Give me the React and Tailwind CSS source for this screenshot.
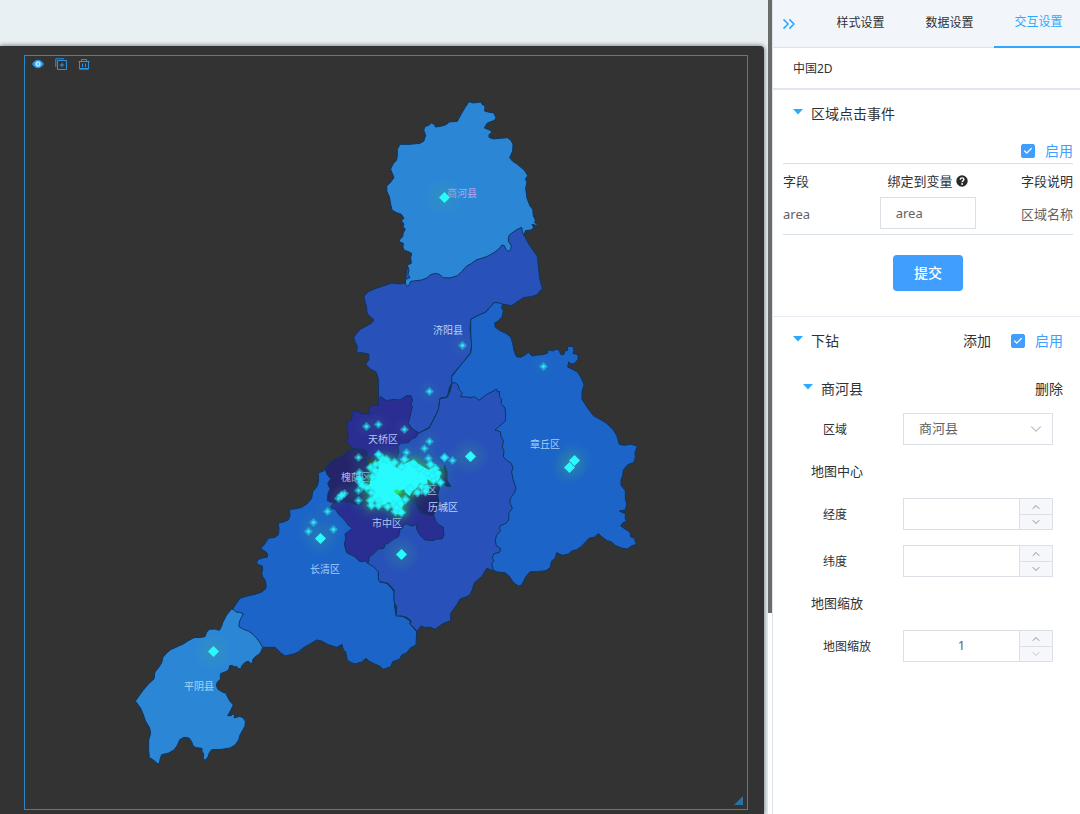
import React from "react";
import { Check, ChevronDown, ChevronUp, ChevronsRight } from "lucide-react";

// Districts in paint order. Outlines are digitised at three times the map scale, from (x, y).
const regions = [
  {
    id: "changqing", x: 220, y: 460, fill: "#1c64c8",
    points: "38,448 48,432 60,415 82,408 105,403 126,396 138,385 138,372 135,360 128,350 125,340 128,330 127,318 114,314 110,308 114,299 124,295 142,291 143,283 138,276 122,265 134,252 145,235 165,232 175,224 177,208 175,190 190,186 205,180 210,168 209,148 225,147 245,142 262,131 275,115 278,95 292,78 296,60 295,40 302,36 310,34 315,25 333,55 345,60 400,120 420,205 405,280 445,308 475,330 475,345 478,365 500,370 512,382 522,395 524,440 528,465 550,470 570,482 570,492 590,515 588,555 572,563 560,578 545,585 540,597 518,605 512,620 490,628 478,618 460,610 448,604 438,595 425,606 405,612 390,606 382,600 377,575 370,570 366,553 350,562 325,554 305,543 290,540 270,552 250,563 235,576 220,582 195,588 182,578 165,562 130,562 118,560 70,520 40,480"
  },
  {
    id: "pingyin", x: 120, y: 590, fill: "#2b87d6",
    points: "335,57 342,60 348,66 358,67 370,71 364,82 358,96 357,110 370,118 385,123 399,133 411,146 420,158 428,172 424,183 418,192 406,200 399,208 396,221 389,218 385,213 374,218 365,228 363,236 355,236 350,229 342,231 338,226 329,227 326,240 315,246 301,251 301,268 292,276 289,286 293,297 307,306 318,310 323,322 330,334 340,345 332,361 323,377 334,377 339,372 344,375 342,384 352,381 359,379 370,384 376,394 375,408 367,422 360,435 356,450 345,465 330,474 305,478 275,479 268,488 264,501 254,512 250,503 251,492 246,484 246,475 228,473 219,467 215,455 207,444 192,442 179,449 172,466 162,480 146,489 125,494 121,505 118,520 112,521 105,514 96,507 88,503 86,480 86,450 92,430 89,414 76,392 69,371 62,355 46,333 70,300 86,281 102,267 105,246 118,230 125,218 129,202 140,189 152,179 190,162 205,152 222,143 245,142 255,140 260,126 268,118 285,117 298,121 305,109 308,98 320,75"
  },
  {
    id: "jiyang", x: 340, y: 220, fill: "#2852b9",
    points: "195,190 180,192 155,189 130,198 105,206 84,216 72,228 75,245 80,262 81,280 92,291 102,299 95,309 78,319 62,327 50,340 41,352 46,367 52,378 50,397 65,398 86,402 87,418 77,432 90,446 108,456 115,475 116,550 180,650 235,640 268,622 295,570 300,535 322,530 329,500 337,488 335,467 365,432 392,398 396,370 390,330 392,298 415,286 438,276 450,262 462,248 485,252 515,257 532,245 550,233 572,230 590,225 607,205 600,180 596,150 592,110 575,85 562,65 550,40 545,22 300,50 200,150"
  },
  {
    id: "zhangqiu", x: 440, y: 290, fill: "#1c64c8",
    points: "162,38 175,38 188,43 184,53 190,62 186,80 175,93 164,99 166,112 180,122 198,130 212,141 218,160 222,182 229,200 242,202 254,196 265,187 276,198 292,195 308,194 323,189 323,179 340,183 347,178 357,180 362,193 370,195 377,181 383,181 382,170 399,169 402,182 399,190 414,194 414,208 408,216 400,222 392,221 386,216 383,231 396,237 413,247 424,265 432,283 426,306 426,328 440,350 460,377 480,388 500,400 520,420 530,436 538,463 552,466 572,463 592,468 585,488 586,502 581,518 563,524 550,540 548,556 543,570 543,586 556,602 556,626 560,642 556,660 538,663 557,672 555,683 560,694 549,698 542,708 560,720 570,727 572,740 583,745 589,763 576,767 562,777 545,774 525,766 514,755 502,752 486,741 475,730 463,742 448,744 435,758 423,770 410,779 395,783 385,792 367,796 350,788 345,805 334,814 331,832 318,842 290,845 271,845 260,856 245,885 235,888 221,878 207,858 195,848 172,846 158,840 120,700 100,450 60,340 35,275 35,260 65,222 92,190 95,170 92,130 92,88 115,76 138,66 150,52"
  },
  {
    id: "shanghe", x: 370, y: 80, fill: "#2b87d6",
    points: "297,65 310,69 333,66 337,74 345,78 344,93 358,97 370,98 378,112 374,121 352,129 343,144 357,149 367,156 357,164 357,172 370,177 390,175 412,173 422,180 429,192 428,213 419,233 428,244 442,253 455,264 465,273 473,287 466,298 471,306 467,325 471,355 480,378 488,388 490,408 496,420 494,428 501,432 502,437 486,433 491,443 483,450 466,452 462,468 457,455 455,442 442,448 430,456 418,465 415,475 416,485 424,498 422,509 414,514 408,508 403,497 396,495 390,503 378,514 360,525 350,530 318,540 305,550 290,558 275,575 262,587 240,594 220,593 208,583 196,580 182,584 170,594 155,600 122,604 118,614 112,619 106,610 107,598 120,593 114,583 117,570 112,555 124,550 122,534 125,520 113,514 103,511 99,502 100,490 86,484 91,477 98,470 100,458 106,448 99,440 102,432 94,422 102,415 94,403 80,398 66,390 62,372 58,350 51,335 50,318 60,309 72,293 67,280 62,268 69,252 80,240 82,225 82,208 90,193 120,193 150,190 161,184 167,166 161,150 166,139 174,137 185,129 193,133 196,141 212,139 228,134 238,126 262,124 272,105 285,83"
  },
  {
    id: "licheng", x: 310, y: 380, fill: "#2852b9",
    points: "427,8 437,9 445,16 447,28 457,38 452,50 470,51 482,53 493,50 507,61 520,51 532,42 545,36 560,27 562,36 569,34 568,50 575,58 573,70 585,84 587,103 586,123 568,139 555,150 571,155 573,169 580,181 577,203 582,212 580,231 594,244 602,248 609,262 605,276 609,298 618,325 612,340 601,355 600,370 607,384 597,398 596,420 588,430 571,437 568,445 572,453 560,464 556,481 559,498 571,504 570,516 552,522 546,535 552,541 545,551 550,572 530,565 515,590 505,598 492,610 487,630 478,646 462,653 450,657 440,675 422,700 422,722 400,730 375,748 360,741 345,743 333,738 325,748 322,757 314,745 300,732 304,723 290,712 275,708 258,708 260,680 252,665 252,630 235,610 210,605 205,600 205,575 190,560 170,548 200,350 200,200 265,190 325,160 358,144 365,130 375,110 385,90 390,56 412,52 420,35"
  },
  {
    id: "tianqiao", x: 310, y: 380, fill: "#2a2d92",
    points: "205,55 212,50 230,62 250,58 270,60 290,47 303,47 308,60 303,72 307,80 300,110 295,130 310,149 325,157 318,172 305,176 296,188 270,190 264,200 267,216 260,235 220,250 170,230 130,206 119,195 110,184 115,170 112,152 111,125 124,119 127,106 125,94 140,93 158,101 178,102 177,84 190,75 206,76"
  },
  {
    id: "huaiyin", x: 310, y: 380, fill: "#25246b",
    points: "130,205 145,207 162,208 172,216 170,240 175,260 230,280 250,330 200,374 120,378 65,368 52,362 54,340 60,327 53,310 62,296 52,285 45,267 60,248 75,238 102,225 115,212"
  },
  {
    id: "shizhong", x: 310, y: 380, fill: "#2a2d92",
    points: "62,378 72,369 90,365 120,367 138,374 170,370 200,372 300,350 330,395 345,402 372,408 378,425 388,435 400,442 402,465 396,477 380,477 370,482 345,480 330,466 320,448 320,433 308,439 285,431 275,447 267,447 270,455 265,470 247,480 235,490 225,493 222,505 205,507 190,522 178,530 175,548 168,543 150,545 134,530 110,518 103,494 107,475 105,462 127,445 115,436 102,418 85,402 76,388 65,385"
  },
  {
    id: "lixia", x: 310, y: 380, fill: "#25246b",
    points: "260,300 340,280 382,282 388,262 395,266 399,278 404,256 411,275 411,300 422,319 410,319 401,311 390,320 383,345 386,360 382,388 375,393 370,408 352,402 340,398 325,388 315,367 260,340"
  }
];

const labels = [
  { text: "商河县", x: 462, y: 197, fill: "#b9a4ee" },
  { text: "济阳县", x: 448, y: 334, fill: "#b5d4fb" },
  { text: "章丘区", x: 545, y: 448, fill: "#a5cefa" },
  { text: "天桥区", x: 383, y: 443, fill: "#b3c5f3" },
  { text: "槐荫区", x: 356, y: 481, fill: "#a9b8e6" },
  { text: "历下区", x: 422, y: 494, fill: "#a9b8e6" },
  { text: "历城区", x: 443, y: 511, fill: "#b5d4fb" },
  { text: "市中区", x: 387, y: 527, fill: "#b3c5f3" },
  { text: "长清区", x: 325, y: 573, fill: "#a5cefa" },
  { text: "平阴县", x: 199, y: 690, fill: "#a9d6f8" }
];

const largePoints = [
  [444, 197], [470, 456], [574, 460], [569, 467], [401, 554], [320, 538], [213, 651]
];

const smallPoints = [
  [462, 345], [543, 366], [429, 391], [366, 426], [378, 424], [404, 429], [429, 441],
  [424, 448], [406, 452], [428, 458], [452, 460], [358, 457], [359, 472], [358, 490],
  [358, 500], [344, 493], [338, 498], [327, 511], [313, 522], [308, 531], [333, 529]
];

const mediumPoints = [
  [444, 457], [341, 495], [378, 454], [382, 458], [370, 467], [375, 464], [404, 459],
  [413, 463], [430, 464], [386, 459], [374, 470], [372, 476], [360, 482], [366, 487],
  [359, 478], [362, 485], [371, 492], [370, 500], [371, 505], [378, 501], [378, 505],
  [387, 506], [393, 504], [395, 511], [401, 512], [396, 507], [400, 503], [405, 499],
  [410, 488], [417, 492], [421, 486], [426, 487], [433, 480], [440, 482], [435, 468],
  [427, 473], [432, 475], [437, 473], [419, 468], [401, 466], [394, 462], [425, 491]
];

const diamond = (x, y, r) => `M${x} ${y - r}L${x + r} ${y}L${x} ${y + r}L${x - r} ${y}Z`;

const clusterCore =
  "170,205 180,203 192,209 205,217 214,234 226,228 240,221 255,214 268,210 280,222 295,230 310,240 322,234 335,240 348,245 345,262 340,272 320,273 306,268 308,280 292,286 285,278 275,294 262,304 254,318 240,306 238,298 226,302 218,312 230,326 236,342 230,358 238,368 228,374 216,372 206,360 205,345 190,335 180,344 166,345 150,330 136,350 130,332 144,318 146,300 130,298 118,293 134,282 138,262 150,255 146,240 162,235 155,218";

function CityMap() {
  return (
    <svg viewBox="25 56 722 753" className="block h-auto w-full" role="img" aria-label="济南市地图">
      <defs>
        <radialGradient id="glow">
          <stop offset="0" stopColor="#3aa77c" stopOpacity="0.6" />
          <stop offset="0.4" stopColor="#3aa58c" stopOpacity="0.26" />
          <stop offset="1" stopColor="#3aa58c" stopOpacity="0" />
        </radialGradient>
        <filter id="soft" x="-40%" y="-40%" width="180%" height="180%">
          <feGaussianBlur stdDeviation="9" />
        </filter>
        <filter id="wide" x="-60%" y="-60%" width="220%" height="220%">
          <feGaussianBlur stdDeviation="24" />
        </filter>
      </defs>
      {regions.map((r) => (
        <g key={r.id} transform={`translate(${r.x} ${r.y}) scale(0.33333)`}>
          <polygon points={r.points} fill={r.fill} stroke="#0c3560" strokeWidth="3" strokeLinejoin="round" />
        </g>
      ))}
      <g fontSize="10" textAnchor="middle" fontFamily="'Noto Sans CJK SC', sans-serif">
        {labels.map((l) => (
          <text key={l.text} x={l.x} y={l.y} fill={l.fill}>{l.text}</text>
        ))}
      </g>
      {largePoints.map(([x, y]) => (
        <circle key={`${x}-${y}`} cx={x} cy={y} r="19" fill="url(#glow)" opacity="0.7" />
      ))}
      {smallPoints.map(([x, y]) => (
        <circle key={`${x}-${y}`} cx={x} cy={y} r="12" fill="url(#glow)" opacity="0.3" />
      ))}
      <g transform="translate(325 390) scale(0.33333)">
        <polygon points={clusterCore} fill="#2b9f8a" stroke="#2b9f8a" strokeWidth="24" opacity="0.6" filter="url(#wide)" />
        <polygon points={clusterCore} fill="#2fb84a" stroke="#2fa85a" strokeWidth="14" opacity="0.8" filter="url(#soft)" />
        <polygon points={clusterCore} fill="#27fbfd" strokeLinejoin="round" />
        <path d="M206 302l10-5 8 6 8-4-2 10-14 6z" fill="#2bd83a" opacity="0.7" />
      </g>
      <g transform="translate(0.5 0.5)">
        {smallPoints.map(([x, y]) => (
          <g key={`${x}-${y}`}>
            <path d={diamond(x, y, 4.5)} fill="#27d0ea" opacity="0.55" />
            <path d={diamond(x, y, 2)} fill="#35f6ff" opacity="0.8" />
          </g>
        ))}
        {mediumPoints.map(([x, y]) => (
          <g key={`${x}-${y}`}>
            <path d={diamond(x, y, 5)} fill="#27e6f4" opacity="0.6" />
            <path d={diamond(x, y, 3)} fill="#27fbfd" opacity="0.9" />
          </g>
        ))}
        {largePoints.map(([x, y]) => (
          <path key={`${x}-${y}`} d={diamond(x, y, 5.5)} fill="#27fbfd" />
        ))}
      </g>
    </svg>
  );
}

function Stage() {
  return (
    <main className="flex min-w-0 flex-1 flex-col overflow-hidden bg-[#e8f0f3]">
      <div className="h-[46px] shrink-0" />
      <div className="mr-1 flex-1 rounded-tr-sm bg-[#333333] pt-[9px] pr-4 pb-1 pl-6 shadow-[0_0_5px_rgba(0,0,0,0.6)]">
        <div className="relative border border-[#2d86c8]">
          <CityMap />
          <div className="absolute top-0.5 left-[7px] flex gap-[11px] text-[#2f93da]">
            <button type="button" aria-label="显示" className="size-3">
              <svg viewBox="0 0 12 12" className="size-3">
                <path d="M0 6C2 3 4 1.8 6 1.8s4 1.2 6 4.2c-2 3-4 4.200-6 4.200S2 9 0 6Z" fill="#1e9bf5" />
                <circle cx="6" cy="6" r="2.8" fill="#b9e2ff" />
                <circle cx="6" cy="6" r="1.100" fill="#4fb3fb" />
              </svg>
            </button>
            <button type="button" aria-label="复制" className="size-3">
              <svg viewBox="0 0 12 12" className="size-3" fill="none" stroke="currentColor">
                <path d="M9 .8H.8V9" />
                <path d="M2.500 2.500h9v9h-9zM7 4.800v4.400M4.800 7h4.400" />
              </svg>
            </button>
            <button type="button" aria-label="删除图层" className="size-3">
              <svg viewBox="0 0 12 12" className="size-3" fill="none" stroke="currentColor">
                <path d="M.5 3.500h11M3.500 3.500v-2h5v2M1.500 3.500v7.700h9V3.500M4.500 5.500v3.600M7.500 5.500v3.600" />
                <path d="M1.500 10.500h9" />
              </svg>
            </button>
          </div>
          <svg viewBox="0 0 9 9" className="absolute right-1 bottom-1 size-[9px]">
            <path d="M9 0v9H0z" fill="#2a72a6" />
          </svg>
        </div>
      </div>
    </main>
  );
}

function Caret() {
  return (
    <svg viewBox="0 0 10 6" className="mb-1 h-[6px] w-[10px] shrink-0">
      <path d="M0 0h10L5 5.5z" fill="#2caaff" />
    </svg>
  );
}

function Toggle({ id }) {
  return (
    <div className="flex items-center gap-[10px] text-sm leading-5 text-[#409eff]">
      <span className="relative size-[14px]">
        <input
          id={id}
          type="checkbox"
          defaultChecked
          className="peer block size-[14px] appearance-none rounded-xs border border-[#dcdfe6] bg-white checked:border-[#409eff] checked:bg-[#409eff]"
        />
        <Check size={10} strokeWidth={3} className="pointer-events-none absolute top-0.5 left-0.5 text-white opacity-0 peer-checked:opacity-100" />
      </span>
      <label htmlFor={id}>启用</label>
    </div>
  );
}

function Field({ id, label, children }) {
  return (
    <div className="flex items-center pr-[27px] pl-[50px]">
      <label htmlFor={id} className="w-20 shrink-0 pt-0.5 text-xs leading-5">{label}</label>
      <div className="min-w-0 flex-1">{children}</div>
    </div>
  );
}

function NumberBox({ id, value, atMin }) {
  return (
    <div className="flex h-8 border border-[#dcdfe6]">
      <input
        id={id}
        type="number"
        defaultValue={value}
        className="min-w-0 flex-1 appearance-none text-center text-[13px] text-[#606266] outline-none [-moz-appearance:textfield] [&::-webkit-inner-spin-button]:appearance-none"
      />
      <div className="flex w-[33px] flex-col border-l border-[#dcdfe6] bg-[#f5f7fa] text-[#8b8e94]">
        <button type="button" aria-label="增加" className="flex h-4 items-center justify-center border-b border-[#dcdfe6] pt-0.5">
          <ChevronUp size={12} strokeWidth={2} />
        </button>
        <button type="button" aria-label="减少" disabled={atMin} className="flex flex-1 items-center justify-center disabled:text-[#c0c4cc]">
          <ChevronDown size={12} strokeWidth={2} />
        </button>
      </div>
    </div>
  );
}

function Panel() {
  return (
    <aside className="w-[308px] shrink-0 overflow-hidden border-l border-[#dce4eb] bg-white text-[#303133]">
      <nav className="flex h-12 border-b border-[#dae2ea] bg-[#f2f6fb] text-xs">
        <button type="button" aria-label="收起" className="flex w-[43px] shrink-0 items-center pl-1.5 text-[#2caaff]">
          <ChevronsRight size={20} strokeWidth={2} />
        </button>
        <button type="button" className="h-[46px] w-[89px] shrink-0">样式设置</button>
        <button type="button" className="h-[46px] w-[89px] shrink-0">数据设置</button>
        <button type="button" className="-mb-px h-12 w-[89px] shrink-0 border-b-2 border-[#2caaff] pb-0.5 text-[#2caaff]">交互设置</button>
      </nav>
      <h1 className="flex h-[42px] items-center border-b-2 border-[#dfe6ee] px-5 pt-0.5 text-xs">中国2D</h1>

      <section className="border-b border-[#e6ebf2] pt-[14px] pb-[25px]">
        <h2 className="flex items-center gap-2 pl-5 text-sm leading-5"><Caret />区域点击事件</h2>
        <div className="mt-[17px] flex justify-end pr-[7px]"><Toggle id="click-on" /></div>
        <div className="mt-[2px] pr-[7px] pl-[10px]">
          <table className="w-full table-fixed border-y border-[#d8e0e8] text-[13px] leading-5">
            <thead>
              <tr className="h-[33px]">
                <th className="pt-0.5 text-left font-normal">字段</th>
                <th className="pt-0.5 font-normal">
                  <span className="flex items-center justify-center gap-1">
                    绑定到变量
                    <svg viewBox="0 0 12 12" className="size-3">
                      <circle cx="6" cy="6" r="5.7" fill="#26282b" />
                      <path d="M4.3 4.7c0-2.5 3.6-2.3 3.6-.2C7.9 5.9 6.1 5.8 6.1 7.2" fill="none" stroke="#fff" strokeWidth="1.4" />
                      <circle cx="6.1" cy="9" r=".9" fill="#fff" />
                    </svg>
                  </span>
                </th>
                <th className="pt-0.5 text-right font-normal">字段说明</th>
              </tr>
            </thead>
            <tbody className="text-[#606266]">
              <tr>
                <td className="pb-[3px]">area</td>
                <td className="pb-[5px]">
                  <input aria-label="绑定到变量" defaultValue="area" className="block h-8 w-full border border-[#dcdfe6] px-[15px] text-[13px] outline-none" />
                </td>
                <td className="pb-[3px] text-right">区域名称</td>
              </tr>
            </tbody>
          </table>
        </div>
        <div className="mt-5 flex justify-center pl-[3px]">
          <button type="button" className="h-9 w-[70px] rounded bg-[#409eff] text-sm font-medium text-white">提交</button>
        </div>
      </section>

      <section className="pt-[14px] pb-8">
        <div className="flex items-center pr-[17px] pl-5">
          <h2 className="flex flex-1 items-center gap-2 text-sm leading-5"><Caret />下钻</h2>
          <button type="button" className="mr-5 text-sm leading-5">添加</button>
          <Toggle id="drill-on" />
        </div>
        <div className="mt-7 flex items-center pr-[17px] pl-[30px]">
          <h3 className="flex flex-1 items-center gap-2 text-sm leading-5"><Caret />商河县</h3>
          <button type="button" className="text-sm leading-5">删除</button>
        </div>
        <div className="mt-[14px]">
          <Field id="region" label="区域">
            <div className="relative">
              <select id="region" defaultValue="shanghe" className="block h-8 w-full appearance-none border border-[#dcdfe6] bg-white px-[15px] text-[13px] text-[#606266] outline-none">
                <option value="shanghe">商河县</option>
              </select>
              <ChevronDown size={18} strokeWidth={1.5} className="pointer-events-none absolute top-[7px] right-2 text-[#c0c4cc]" />
            </div>
          </Field>
        </div>
        <h4 className="mt-4 pl-[38px] text-[13px] leading-5">地图中心</h4>
        <div className="mt-[17px] flex flex-col gap-[15px]">
          <Field id="lng" label="经度"><NumberBox id="lng" /></Field>
          <Field id="lat" label="纬度"><NumberBox id="lat" /></Field>
        </div>
        <h4 className="mt-4 pl-[38px] text-[13px] leading-5">地图缩放</h4>
        <div className="mt-[17px]">
          <Field id="zoom" label="地图缩放"><NumberBox id="zoom" value="1" atMin /></Field>
        </div>
      </section>
    </aside>
  );
}

export default function App() {
  return (
    <div className="flex min-h-screen bg-white font-['Noto_Sans','Noto_Sans_CJK_SC',sans-serif]">
      <Stage />
      <div className="w-1 shrink-0 bg-white">
        <div className="h-[75.3%] bg-[#6b6b6b]" />
      </div>
      <Panel />
    </div>
  );
}
